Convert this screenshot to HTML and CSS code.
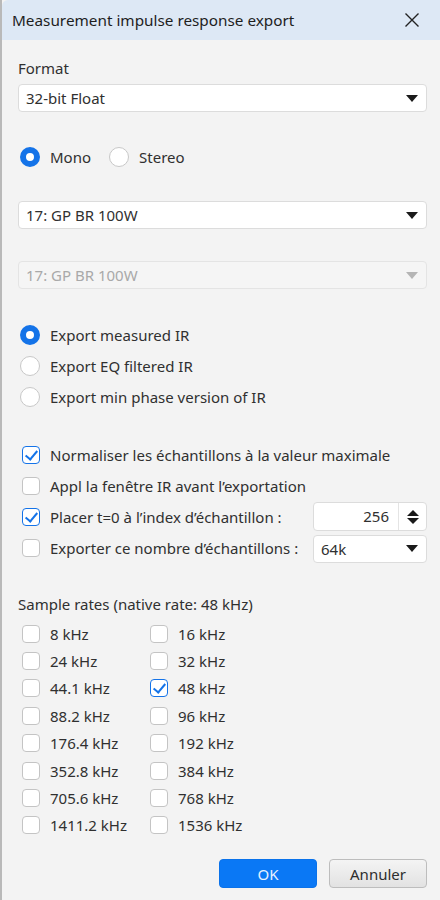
FILE: index.html
```html
<!DOCTYPE html>
<html lang="fr">
<head>
<meta charset="utf-8">
<title>Measurement impulse response export</title>
<link rel="stylesheet" href="styles.css">
</head>
<body>
<div class="window">
  <div class="titlebar">
    <span class="title">Measurement impulse response export</span>
    <svg class="close" width="16" height="16" viewBox="0 0 16 16"><path d="M1.5 1.5 L14.5 14.5 M14.5 1.5 L1.5 14.5" stroke="#222" stroke-width="1.4" fill="none"/></svg>
  </div>
  <div class="content">
    <div class="label">Format</div>
    <div class="combo"><span>32-bit Float</span><span class="arrow"></span></div>

    <div class="radio-row inline">
      <label class="opt"><span class="radio on"></span>Mono</label>
      <label class="opt"><span class="radio"></span>Stereo</label>
    </div>

    <div class="combo c2"><span>17: GP BR 100W</span><span class="arrow"></span></div>
    <div class="combo c3 disabled"><span>17: GP BR 100W</span><span class="arrow"></span></div>

    <div class="group radios">
      <label class="opt row"><span class="radio on"></span>Export measured IR</label>
      <label class="opt row"><span class="radio"></span>Export EQ filtered IR</label>
      <label class="opt row"><span class="radio"></span>Export min phase version of IR</label>
    </div>

    <div class="group checks">
      <label class="opt row"><span class="check on"></span>Normaliser les échantillons à la valeur maximale</label>
      <label class="opt row"><span class="check"></span>Appl la fenêtre IR avant l’exportation</label>
      <div class="row split">
        <label class="opt"><span class="check on"></span>Placer t=0 à l’index d’échantillon :</label>
        <div class="spin"><span class="val">256</span><span class="spinbtn"><span class="up"></span><span class="down"></span></span></div>
      </div>
      <div class="row split">
        <label class="opt"><span class="check"></span>Exporter ce nombre d’échantillons :</label>
        <div class="combo small"><span>64k</span><span class="arrow"></span></div>
      </div>
    </div>

    <div class="label rates-label">Sample rates (native rate: 48 kHz)</div>
    <div class="rates">
      <label class="opt"><span class="check"></span>8 kHz</label>
      <label class="opt"><span class="check"></span>16 kHz</label>
      <label class="opt"><span class="check"></span>24 kHz</label>
      <label class="opt"><span class="check"></span>32 kHz</label>
      <label class="opt"><span class="check"></span>44.1 kHz</label>
      <label class="opt"><span class="check on"></span>48 kHz</label>
      <label class="opt"><span class="check"></span>88.2 kHz</label>
      <label class="opt"><span class="check"></span>96 kHz</label>
      <label class="opt"><span class="check"></span>176.4 kHz</label>
      <label class="opt"><span class="check"></span>192 kHz</label>
      <label class="opt"><span class="check"></span>352.8 kHz</label>
      <label class="opt"><span class="check"></span>384 kHz</label>
      <label class="opt"><span class="check"></span>705.6 kHz</label>
      <label class="opt"><span class="check"></span>768 kHz</label>
      <label class="opt"><span class="check"></span>1411.2 kHz</label>
      <label class="opt"><span class="check"></span>1536 kHz</label>
    </div>

    <div class="buttons">
      <button class="btn ok">OK</button>
      <button class="btn cancel">Annuler</button>
    </div>
  </div>
</div>
</body>
</html>
```
FILE: styles.css
```css
* { box-sizing: border-box; }
html, body { margin: 0; padding: 0; }
body {
  width: 440px;
  height: 900px;
  overflow: hidden;
  background: #f3f3f3;
  font-family: "Noto Sans", "Open Sans", sans-serif;
  font-size: 15px;
  color: #303030;
}
.window {
  height: 900px;
  border-left: 2px solid #b9b9b9;
  background: #f3f3f3;
}
.titlebar {
  height: 40px;
  background: #dde8f5;
  border-top-left-radius: 6px;
  display: flex;
  align-items: center;
  justify-content: space-between;
  padding: 0 20px 0 10px;
}
.title { font-size: 15.3px; color: #1e1e1e; }
.close { display: block; }
.content { padding: 18px 13px 0 16px; }
.label { line-height: 20px; height: 20px; }
.combo {
  margin-top: 6px;
  height: 28px;
  background: #fff;
  border: 1px solid #dcdcdc;
  border-radius: 4px;
  display: flex;
  align-items: center;
  justify-content: space-between;
  padding: 0 8px 0 7px;
}
.arrow {
  width: 0; height: 0;
  border-left: 6px solid transparent;
  border-right: 6px solid transparent;
  border-top: 7px solid #1a1a1a;
}
.combo.disabled { background: #f5f5f5; border-color: #e4e4e4; color: #a9a9a9; }
.combo.disabled .arrow { border-top-color: #b5b5b5; }
.c2 { margin-top: 34px; }
.c3 { margin-top: 32px; }
.opt { display: flex; align-items: center; white-space: nowrap; }
.radio-row.inline { margin-top: 35px; height: 20px; display: flex; gap: 16px; }
.radio {
  width: 20px; height: 20px;
  border-radius: 50%;
  border: 1px solid #c8c8c8;
  background: #fff;
  margin: 0 10px 0 2px;
  flex: none;
}
.radio.on {
  border: 6px solid #1473e8;
  background: #fff;
}
.group.radios { margin-top: 30px; }
.row { height: 31px; }
.group.checks { margin-top: 27px; }
.check {
  width: 18px; height: 18px;
  border: 1px solid #c4c4c4;
  border-radius: 4px;
  background: #fff;
  margin: 0 10px 0 4px;
  flex: none;
  position: relative;
}
.check.on { border-color: #1473e8; }
.check.on::after {
  content: "";
  position: absolute;
  left: 5px; top: 1px;
  width: 5px; height: 10px;
  border-right: 2px solid #1473e8;
  border-bottom: 2px solid #1473e8;
  transform: rotate(40deg);
}
.split { display: flex; align-items: center; justify-content: space-between; }
.spin {
  width: 114px; height: 29px;
  background: #fff;
  border: 1px solid #dcdcdc;
  border-radius: 4px;
  display: flex;
  align-items: stretch;
}
.spin .val { flex: 1; text-align: right; padding-right: 9px; line-height: 27px; border-right: 1px solid #e4e4e4; }
.spinbtn { width: 27px; display: flex; flex-direction: column; align-items: center; justify-content: center; gap: 2px; }
.up { width: 0; height: 0; border-left: 6px solid transparent; border-right: 6px solid transparent; border-bottom: 6px solid #1a1a1a; }
.down { width: 0; height: 0; border-left: 6px solid transparent; border-right: 6px solid transparent; border-top: 6px solid #1a1a1a; }
.combo.small { width: 114px; margin-top: 2px; height: 28px; }
.rates-label { margin-top: 31px; }
.rates {
  margin-top: 6px;
  display: grid;
  grid-template-columns: 128px 128px;
  grid-auto-rows: 27.4px;
}
.buttons {
  margin-top: 20px;
  display: flex;
  justify-content: flex-end;
  gap: 12px;
  padding-right: 0;
}
.btn {
  width: 98px; height: 29px;
  border-radius: 4px;
  font-family: inherit;
  font-size: 15px;
}
.ok { background: #0a78f5; color: #e6f0ff; border: 1px solid #0a72ea; }
.cancel {
  background: linear-gradient(#f4f4f4, #e2e2e2);
  border: 1px solid #bdbdbd;
  color: #2e2e2e;
}
```
